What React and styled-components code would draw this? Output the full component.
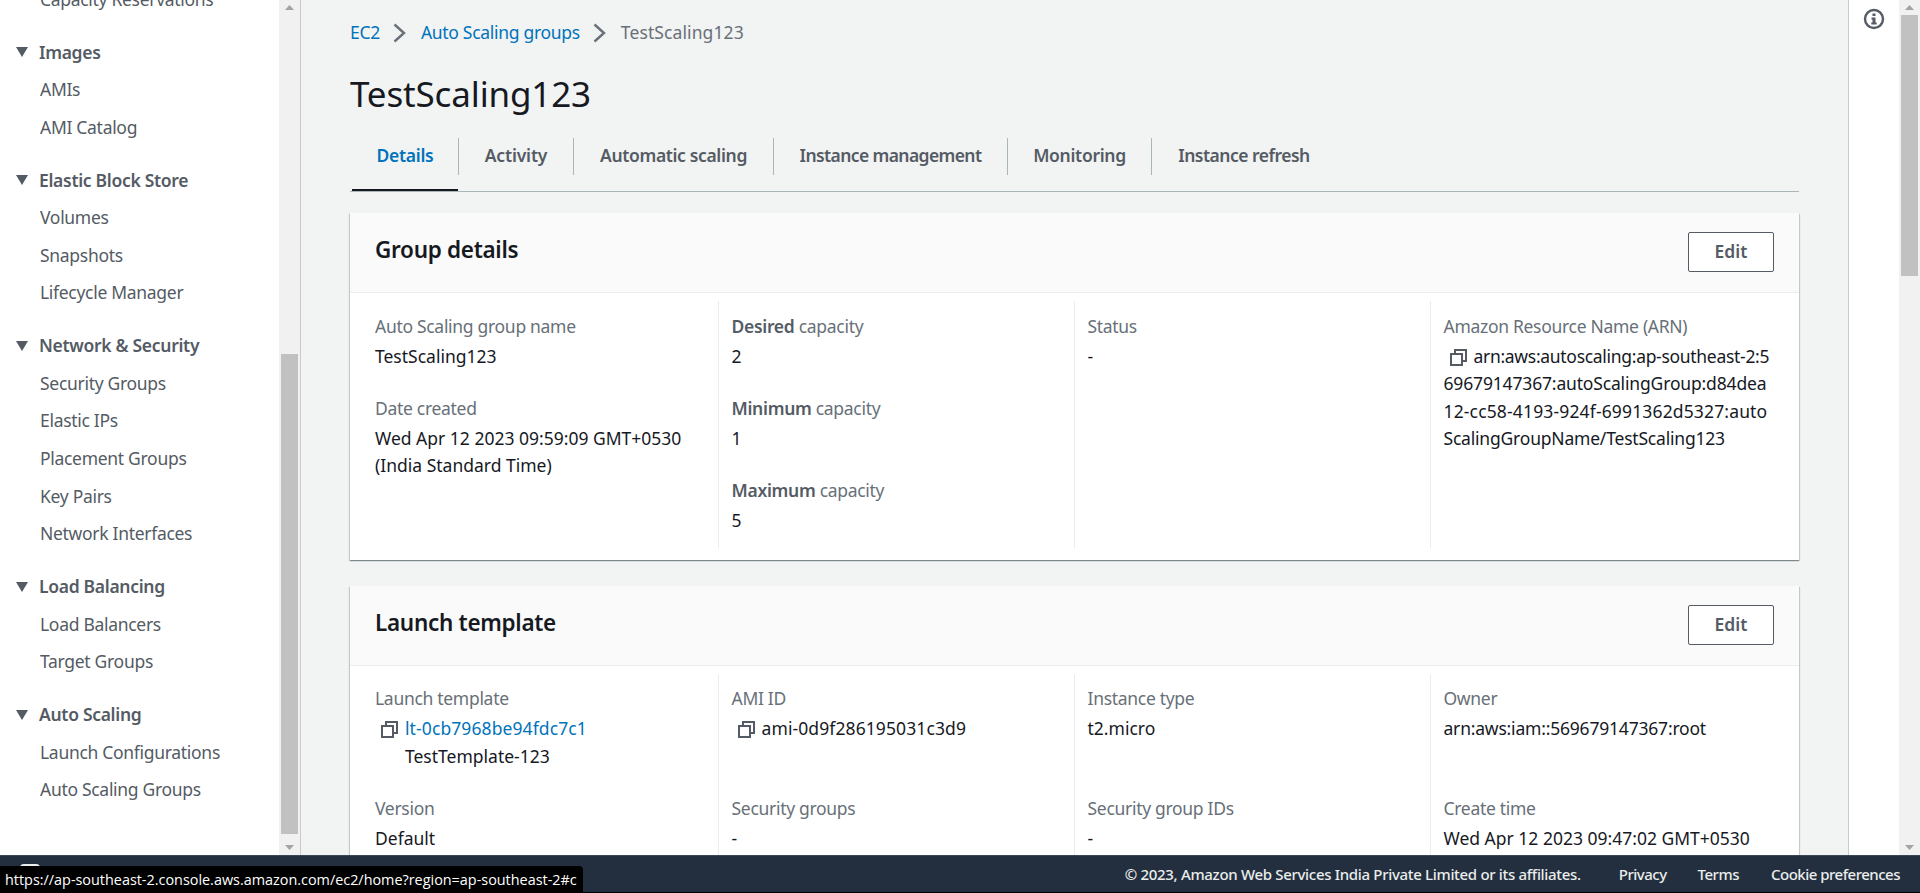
import React from "react";
import styled, { createGlobalStyle } from "styled-components";

const GlobalStyle = createGlobalStyle`
  html, body {
    margin: 0;
    height: 100%;
    overflow: hidden;
  }
  body {
    font-family: "Noto Sans", "Liberation Sans", sans-serif;
    color: #16191f;
  }
`;

const Page = styled.div`
  position: relative;
  height: 893px;
  display: flex;
  flex-direction: column;
  overflow: hidden;
  font-family: "Noto Sans", "Liberation Sans", sans-serif;
  font-size: 17.5px;
  line-height: 27.5px;
  letter-spacing: -0.3px;
`;

const Body = styled.div`
  flex: 1;
  min-height: 0;
  display: flex;
`;

const Sidebar = styled.nav`
  width: 279px;
  flex-shrink: 0;
  background: #fff;
  overflow: hidden;
`;

const NavList = styled.div`
  margin-top: -19.5px;
`;

const NavGroup = styled.div`
  margin-bottom: 15.5px;
`;

const NavHeading = styled.div`
  height: 37.55px;
  display: flex;
  align-items: center;
  gap: 11px;
  padding-left: 16px;
  font-weight: 600;
  color: #545b64;
`;

const NavItem = styled.div`
  height: 37.55px;
  display: flex;
  align-items: center;
  padding-left: 40px;
  color: #545b64;
  white-space: nowrap;
`;

const ScrollTrack = styled.div`
  width: 21px;
  flex-shrink: 0;
  background: #f1f1f1;
  display: flex;
  flex-direction: column;
  align-items: center;
`;

const ScrollArrow = styled.div`
  height: 15px;
  flex-shrink: 0;
  display: flex;
  align-items: center;
  justify-content: center;
`;

const ScrollThumb = styled.div`
  width: 17px;
  height: ${(p) => p.$height}px;
  margin-top: ${(p) => p.$offset}px;
  background: #c1c1c1;
`;

const Spacer = styled.div`
  flex: 1;
`;

const Main = styled.main`
  flex: 1;
  min-width: 0;
  background: #f2f3f3;
  border-left: 1px solid #c6cccc;
  border-right: 1px solid #c6cccc;
  padding: 0 49px;
  overflow: hidden;
`;

const Breadcrumbs = styled.div`
  height: 64px;
  box-sizing: border-box;
  padding-top: 2px;
  display: flex;
  align-items: center;
  white-space: nowrap;
`;

const CrumbLink = styled.a`
  color: #0073bb;
`;

const CrumbCurrent = styled.span`
  color: #687078;
  letter-spacing: 0.1px;
`;

const CrumbChevron = styled.svg`
  width: 13px;
  height: 20px;
  margin: 0 15px 0 13px;
  flex-shrink: 0;
`;

const Title = styled.h1`
  margin: 0;
  height: 60px;
  line-height: 60px;
  font-size: 35px;
  font-weight: 400;
  letter-spacing: -0.15px;
  color: #16191f;
`;

const Tabs = styled.div`
  margin-top: 4px;
  height: 64px;
  display: flex;
  align-items: flex-start;
  padding: 10px 0 0 2px;
  box-sizing: border-box;
  border-bottom: 1px solid #aab7b8;
`;

const Tab = styled.div`
  position: relative;
  width: ${(p) => p.$width}px;
  height: 37px;
  box-sizing: border-box;
  padding-bottom: 2px;
  display: flex;
  align-items: center;
  justify-content: center;
  font-weight: 600;
  white-space: nowrap;
  letter-spacing: ${(p) => p.$spacing}px;
  color: ${(p) => (p.$active ? "#0073bb" : "#545b64")};
  border-right: ${(p) => (p.$last ? "none" : "1px solid #aab7b8")};

  &::after {
    content: "";
    display: ${(p) => (p.$active ? "block" : "none")};
    position: absolute;
    left: 0;
    right: 0;
    bottom: -16px;
    height: 2px;
    background: #16191f;
  }
`;

const Card = styled.section`
  margin-top: ${(p) => p.$gap}px;
  background: #fff;
  box-shadow: 0 1px 1px 0 rgba(0, 28, 36, 0.3), 1px 1px 1px 0 rgba(0, 28, 36, 0.15),
    -1px 1px 1px 0 rgba(0, 28, 36, 0.15);
`;

const CardHeader = styled.header`
  height: 79px;
  display: flex;
  align-items: center;
  justify-content: space-between;
  padding: 0 25px;
  background: #fafafa;
  border-bottom: 1px solid #eaeded;
`;

const CardTitle = styled.h2`
  margin: 0 0 5px;
  font-size: 22.5px;
  font-weight: 600;
  color: #16191f;
`;

const EditButton = styled.button`
  width: 86px;
  height: 40px;
  margin-bottom: 1px;
  border: 1px solid #545b64;
  border-radius: 2px;
  background: #fff;
  color: #545b64;
  font: inherit;
  font-weight: 600;
`;

const CardBody = styled.div`
  display: grid;
  grid-template-columns: 368px 356px 356px 1fr;
  padding: 8px 0 12px;
`;

const Column = styled.div`
  padding: 11.5px 0 13.5px ${(p) => (p.$first ? 25 : 12.5)}px;
  border-left: ${(p) => (p.$first ? "none" : "1px solid #eaeded")};
  display: flex;
  flex-direction: column;
  gap: 24.5px;
`;

const Field = styled.div`
  min-height: ${(p) => p.$minHeight || 0}px;
`;

const Label = styled.div`
  color: #687078;
  margin-bottom: 2.5px;
  white-space: nowrap;
`;

const Value = styled.div`
  color: #16191f;
  white-space: nowrap;
  letter-spacing: ${(p) => p.$spacing ?? 0}px;
`;

const ArnLine = styled.div`
  letter-spacing: ${(p) => p.$spacing}px;
`;

const Hanging = styled.div`
  padding-left: 30px;
`;

const StrongLabel = styled.span`
  font-weight: 600;
  color: #545b64;
`;

const CopyGlyph = styled.svg`
  width: 17px;
  height: 17px;
  margin: 0 7px 0 6px;
  vertical-align: -3px;
`;

const ValueLink = styled.a`
  color: #0073bb;
  letter-spacing: 0.1px;
`;

const HelpPanel = styled.aside`
  width: 50px;
  flex-shrink: 0;
  background: #fff;
  display: flex;
  justify-content: center;
  align-items: flex-start;
  padding-top: 8px;
  box-sizing: border-box;
`;

const InfoGlyph = styled.svg`
  width: 22px;
  height: 22px;
`;

const Footer = styled.footer`
  height: 38px;
  flex-shrink: 0;
  box-sizing: border-box;
  background: #232f3e;
  border-top: 1px solid #3b4654;
  border-bottom: 1px solid #000;
  display: flex;
  align-items: center;
  padding: 0 20px;
  font-size: 15px;
  line-height: 20px;
  font-weight: 500;
  color: #eaeded;
`;

const FeedbackMark = styled.div`
  width: 20px;
  height: 6px;
  align-self: flex-start;
  margin-top: 8px;
  background: #eaeded;
  border-radius: 4px 4px 0 0;
`;

const Copyright = styled.span`
  margin-left: auto;
  margin-right: 38px;
  letter-spacing: -0.32px;
`;

const FooterLink = styled.a`
  margin-left: ${(p) => p.$gap}px;
  letter-spacing: -0.5px;
`;

const StatusBubble = styled.div`
  position: absolute;
  left: 0;
  bottom: 0;
  width: 583px;
  height: 27px;
  box-sizing: border-box;
  padding-left: 5px;
  display: flex;
  align-items: center;
  background: #000;
  border-top-right-radius: 4px;
  color: #fff;
  font-family: "Open Sans", sans-serif;
  font-size: 14.4px;
  letter-spacing: 0;
  white-space: nowrap;
`;

const navGroups = [
  { title: null, items: ["Capacity Reservations"] },
  { title: "Images", items: ["AMIs", "AMI Catalog"] },
  { title: "Elastic Block Store", items: ["Volumes", "Snapshots", "Lifecycle Manager"] },
  {
    title: "Network & Security",
    items: ["Security Groups", "Elastic IPs", "Placement Groups", "Key Pairs", "Network Interfaces"],
  },
  { title: "Load Balancing", items: ["Load Balancers", "Target Groups"] },
  { title: "Auto Scaling", items: ["Launch Configurations", "Auto Scaling Groups"] },
];

const tabs = [
  { label: "Details", width: 107, spacing: -0.3 },
  { label: "Activity", width: 115, spacing: -0.15 },
  { label: "Automatic scaling", width: 200, spacing: -0.35 },
  { label: "Instance management", width: 234, spacing: -0.6 },
  { label: "Monitoring", width: 144, spacing: -0.3 },
  { label: "Instance refresh", width: 184, spacing: -0.5 },
];

const Caret = () => (
  <svg width="12" height="10" viewBox="0 0 12 10">
    <polygon points="0,0 12,0 6,10" fill="#545b64" />
  </svg>
);

const Chevron = () => (
  <CrumbChevron viewBox="0 0 13 20">
    <polyline points="1.5,1.5 11,10 1.5,18.5" fill="none" stroke="#687078" strokeWidth="2.4" />
  </CrumbChevron>
);

const CopyIcon = () => (
  <CopyGlyph viewBox="0 0 17 17">
    <path d="M1 5h11v11H1z M5 5V1h11v11h-4" fill="none" stroke="#545b64" strokeWidth="2" />
  </CopyGlyph>
);

const ArrowUp = () => (
  <svg width="9" height="5" viewBox="0 0 9 5">
    <polygon points="0,5 9,5 4.5,0" fill="#a3a3a3" />
  </svg>
);

const ArrowDown = () => (
  <svg width="9" height="5" viewBox="0 0 9 5">
    <polygon points="0,0 9,0 4.5,5" fill="#a3a3a3" />
  </svg>
);

const Scrollbar = ({ offset, height }) => (
  <ScrollTrack>
    <ScrollArrow>
      <ArrowUp />
    </ScrollArrow>
    <ScrollThumb $offset={offset} $height={height} />
    <Spacer />
    <ScrollArrow>
      <ArrowDown />
    </ScrollArrow>
  </ScrollTrack>
);

const App = () => {
  return (
    <Page>
      <GlobalStyle />
      <Body>
        <Sidebar>
          <NavList>
            {navGroups.map((group, index) => (
              <NavGroup key={index}>
                {group.title && (
                  <NavHeading>
                    <Caret />
                    {group.title}
                  </NavHeading>
                )}
                {group.items.map((item) => (
                  <NavItem key={item}>{item}</NavItem>
                ))}
              </NavGroup>
            ))}
          </NavList>
        </Sidebar>
        <Scrollbar offset={339} height={480} />
        <Main>
          <Breadcrumbs>
            <CrumbLink>EC2</CrumbLink>
            <Chevron />
            <CrumbLink>Auto Scaling groups</CrumbLink>
            <Chevron />
            <CrumbCurrent>TestScaling123</CrumbCurrent>
          </Breadcrumbs>
          <Title>TestScaling123</Title>
          <Tabs>
            {tabs.map((tab, index) => (
              <Tab
                key={tab.label}
                $width={tab.width}
                $spacing={tab.spacing}
                $active={index === 0}
                $last={index === tabs.length - 1}
              >
                {tab.label}
              </Tab>
            ))}
          </Tabs>

          <Card $gap={21}>
            <CardHeader>
              <CardTitle>Group details</CardTitle>
              <EditButton>Edit</EditButton>
            </CardHeader>
            <CardBody>
              <Column $first>
                <Field>
                  <Label>Auto Scaling group name</Label>
                  <Value>TestScaling123</Value>
                </Field>
                <Field>
                  <Label>Date created</Label>
                  <Value>
                    Wed Apr 12 2023 09:59:09 GMT+0530
                    <br />
                    (India Standard Time)
                  </Value>
                </Field>
              </Column>
              <Column>
                <Field>
                  <Label>
                    <StrongLabel>Desired</StrongLabel> capacity
                  </Label>
                  <Value>2</Value>
                </Field>
                <Field>
                  <Label>
                    <StrongLabel>Minimum</StrongLabel> capacity
                  </Label>
                  <Value>1</Value>
                </Field>
                <Field>
                  <Label>
                    <StrongLabel>Maximum</StrongLabel> capacity
                  </Label>
                  <Value>5</Value>
                </Field>
              </Column>
              <Column>
                <Field>
                  <Label>Status</Label>
                  <Value>-</Value>
                </Field>
              </Column>
              <Column>
                <Field>
                  <Label>Amazon Resource Name (ARN)</Label>
                  <Value>
                    <ArnLine $spacing={-0.3}>
                      <CopyIcon />
                      arn:aws:autoscaling:ap-southeast-2:5
                    </ArnLine>
                    <ArnLine $spacing={-0.16}>69679147367:autoScalingGroup:d84dea</ArnLine>
                    <ArnLine $spacing={0.15}>12-cc58-4193-924f-6991362d5327:auto</ArnLine>
                    <ArnLine $spacing={-0.2}>ScalingGroupName/TestScaling123</ArnLine>
                  </Value>
                </Field>
              </Column>
            </CardBody>
          </Card>

          <Card $gap={26}>
            <CardHeader>
              <CardTitle>Launch template</CardTitle>
              <EditButton>Edit</EditButton>
            </CardHeader>
            <CardBody>
              <Column $first>
                <Field>
                  <Label>Launch template</Label>
                  <Value>
                    <CopyIcon />
                    <ValueLink>lt-0cb7968be94fdc7c1</ValueLink>
                    <Hanging>TestTemplate-123</Hanging>
                  </Value>
                </Field>
                <Field>
                  <Label>Version</Label>
                  <Value>Default</Value>
                </Field>
              </Column>
              <Column>
                <Field $minHeight={85.5}>
                  <Label>AMI ID</Label>
                  <Value $spacing={0.1}>
                    <CopyIcon />
                    ami-0d9f286195031c3d9
                  </Value>
                </Field>
                <Field>
                  <Label>Security groups</Label>
                  <Value>-</Value>
                </Field>
              </Column>
              <Column>
                <Field $minHeight={85.5}>
                  <Label>Instance type</Label>
                  <Value>t2.micro</Value>
                </Field>
                <Field>
                  <Label>Security group IDs</Label>
                  <Value>-</Value>
                </Field>
              </Column>
              <Column>
                <Field $minHeight={85.5}>
                  <Label>Owner</Label>
                  <Value $spacing={-0.2}>arn:aws:iam::569679147367:root</Value>
                </Field>
                <Field>
                  <Label>Create time</Label>
                  <Value>Wed Apr 12 2023 09:47:02 GMT+0530</Value>
                </Field>
              </Column>
            </CardBody>
          </Card>
        </Main>
        <HelpPanel>
          <InfoGlyph viewBox="0 0 22 22">
            <circle cx="11" cy="11" r="9" fill="none" stroke="#545b64" strokeWidth="2.4" />
            <path d="M9.5 5.5h3v2.5h-3z M8.5 9.5h4v5h1.2v2H8.3v-2h1.2v-3h-1z" fill="#545b64" />
          </InfoGlyph>
        </HelpPanel>
        <Scrollbar offset={0} height={261} />
      </Body>
      <Footer>
        <FeedbackMark />
        <Copyright>© 2023, Amazon Web Services India Private Limited or its affiliates.</Copyright>
        <FooterLink $gap={0}>Privacy</FooterLink>
        <FooterLink $gap={31}>Terms</FooterLink>
        <FooterLink $gap={32}>Cookie preferences</FooterLink>
      </Footer>
      <StatusBubble>https://ap-southeast-2.console.aws.amazon.com/ec2/home?region=ap-southeast-2#c</StatusBubble>
    </Page>
  );
};

export default App;
